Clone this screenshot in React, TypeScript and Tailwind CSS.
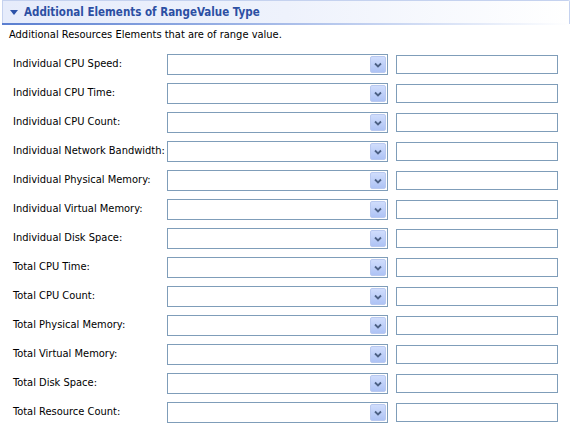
const labels = [
  'Individual CPU Speed:',
  'Individual CPU Time:',
  'Individual CPU Count:',
  'Individual Network Bandwidth:',
  'Individual Physical Memory:',
  'Individual Virtual Memory:',
  'Individual Disk Space:',
  'Total CPU Time:',
  'Total CPU Count:',
  'Total Physical Memory:',
  'Total Virtual Memory:',
  'Total Disk Space:',
  'Total Resource Count:',
]

function Combo() {
  return (
    <div className="w-[221px] h-[21px] border border-[#7f9db9] bg-white flex items-center justify-end pr-[1px]">
      <div className="w-[16px] h-[17px] rounded-[2px] bg-gradient-to-b from-[#d0ddfc] to-[#aec3f5] border border-[#b9c9f0] flex items-center justify-center">
        <svg width="8" height="6" viewBox="0 0 8 6">
          <path d="M1 1.5 L4 4.5 L7 1.5" fill="none" stroke="#4d6185" strokeWidth="1.8" />
        </svg>
      </div>
    </div>
  )
}

export default function App() {
  return (
    <div className="w-[577px] h-[436px] bg-white text-[11px] text-black overflow-hidden" style={{ fontFamily: 'Tahoma, "DejaVu Sans Condensed", "Liberation Sans", sans-serif' }}>
      <div className="ml-[2px] w-[568px] h-[24px] border-t border-l border-r border-[#c5d2ef] rounded-tr-[2px] bg-gradient-to-r from-[#e6ecfb] via-[#eef2fc] to-white relative flex items-center">
        <svg className="ml-[7px]" width="8" height="5" viewBox="0 0 8 5">
          <path d="M0 0 H8 L4 5 Z" fill="#2c52a8" />
        </svg>
        <span className="ml-[6px] font-bold text-[11.5px] text-[#2c4fa3]">Additional Elements of RangeValue Type</span>
        <div className="absolute left-[-1px] right-0 bottom-[-1px] h-[2px] bg-gradient-to-r from-[#5a7ed0] via-[#a9bde9] to-white" />
      </div>
      <div className="pl-[9px] pt-[3px] h-[30px]">Additional Resources Elements that are of range value.</div>
      <div className="flex flex-col gap-[8px]">
        {labels.map((l) => (
          <div key={l} className="flex items-center h-[21px]">
            <div className="w-[167px] pl-[13px]">{l}</div>
            <Combo />
            <div className="ml-[8px] w-[162px] h-[19px] border border-[#7f9db9] bg-white" />
          </div>
        ))}
      </div>
    </div>
  )
}
